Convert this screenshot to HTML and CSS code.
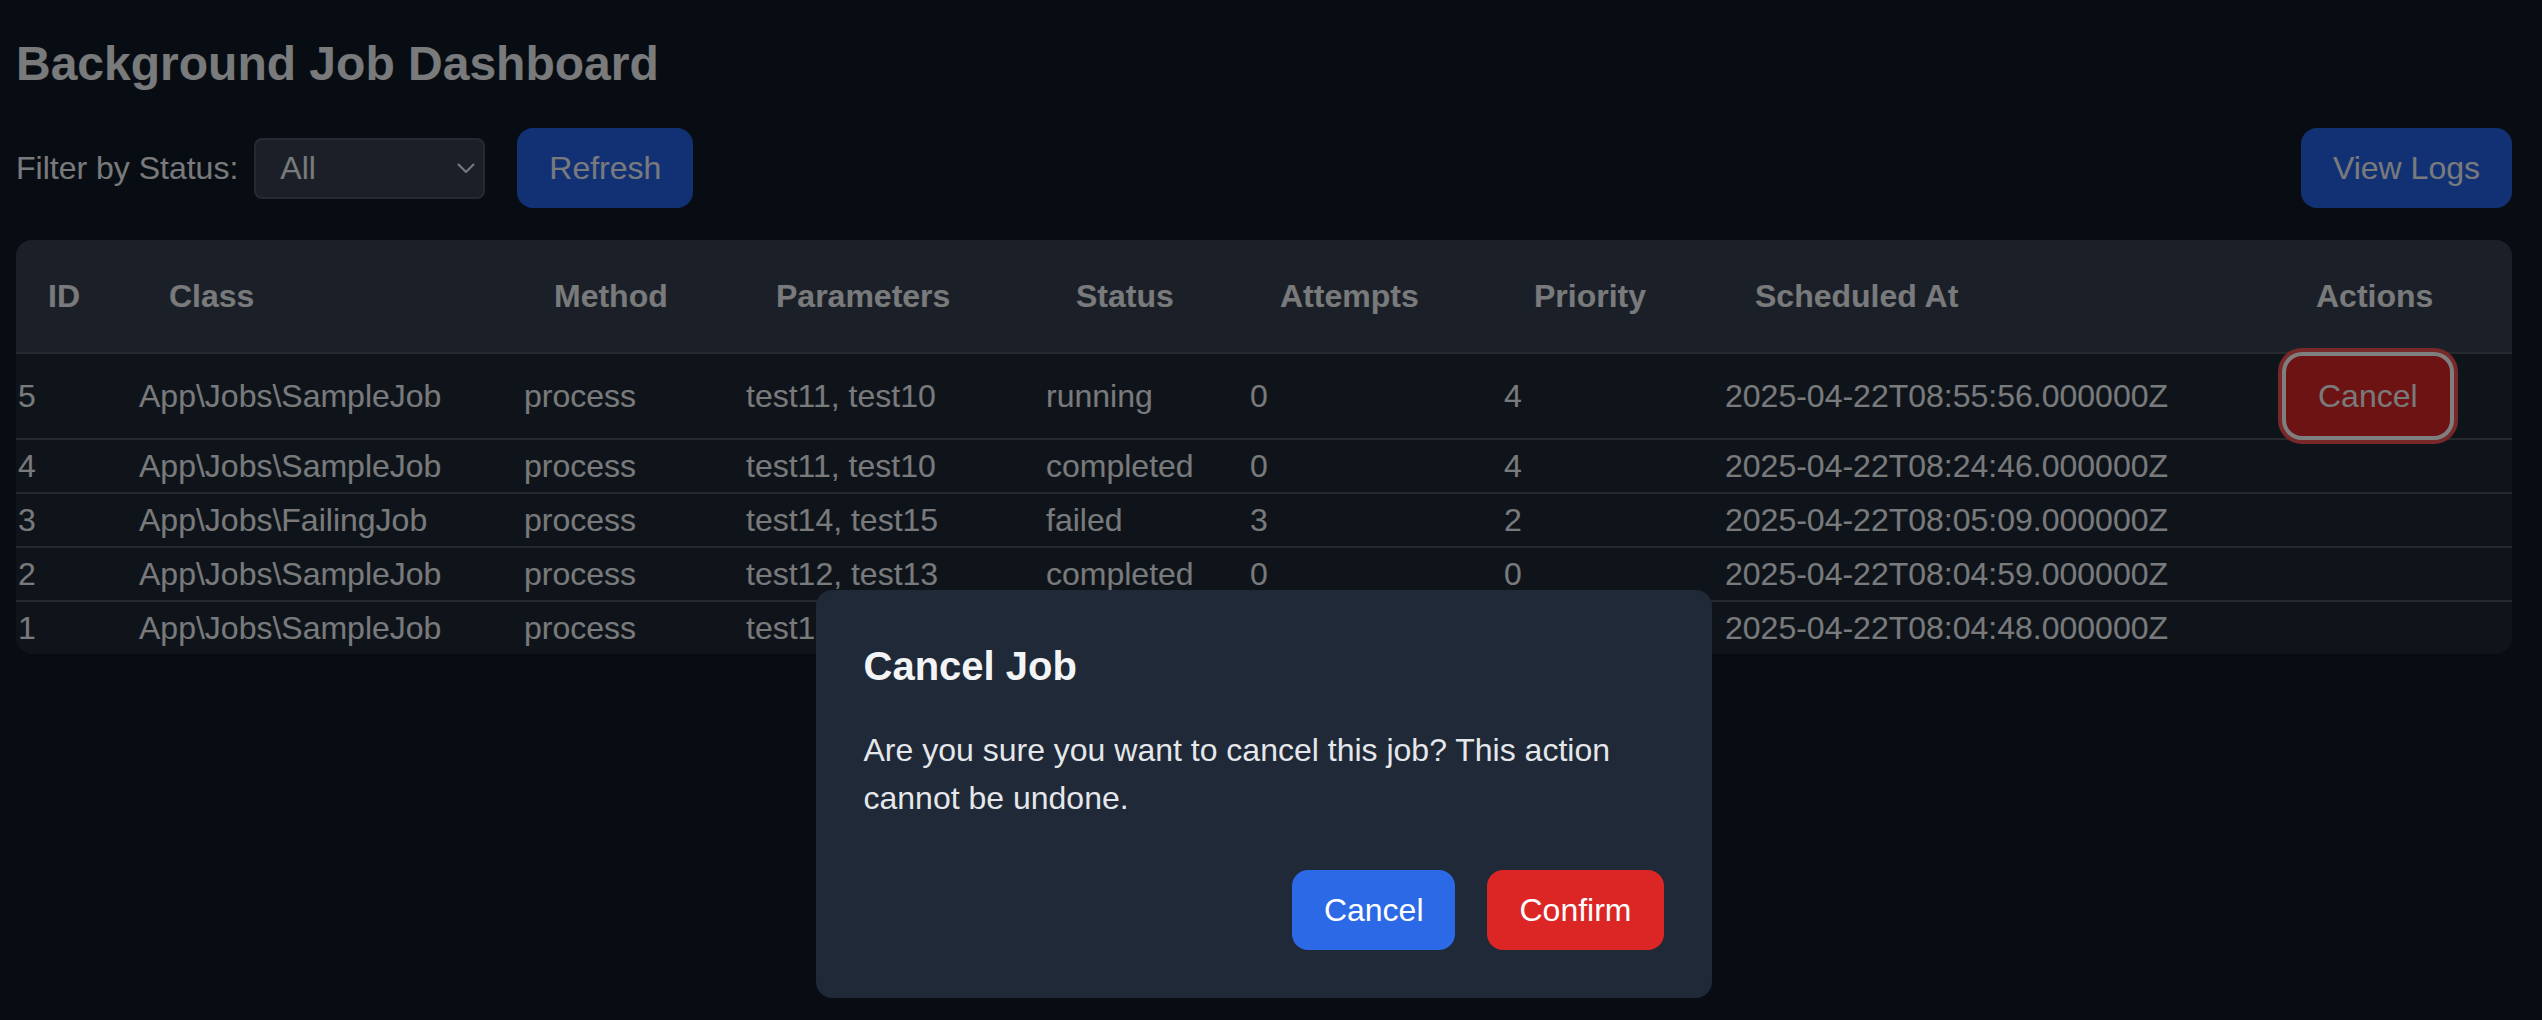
FILE: index.html
```html
<!DOCTYPE html>
<html lang="en">
<head>
<meta charset="utf-8">
<title>Background Job Dashboard</title>
<link rel="stylesheet" href="styles.css">
</head>
<body>
<div class="page">
  <h1 class="title">Background Job Dashboard</h1>
  <div class="controls">
    <label class="filter-label">Filter by Status:</label>
    <div class="select">
      <span class="select-value">All</span>
      <svg class="chevron" width="18" height="10" viewBox="0 0 18 10"><path d="M1 1 L9 9 L17 1" fill="none" stroke="currentColor" stroke-width="2"/></svg>
    </div>
    <button class="btn btn-blue refresh">Refresh</button>
    <div class="spacer"></div>
    <button class="btn btn-blue">View Logs</button>
  </div>
  <div class="table-wrap">
    <table class="jobs">
      <colgroup>
        <col class="c-id"><col class="c-class"><col class="c-method"><col class="c-params"><col class="c-status"><col class="c-attempts"><col class="c-priority"><col class="c-sched"><col class="c-actions">
      </colgroup>
      <thead>
        <tr><th>ID</th><th>Class</th><th>Method</th><th>Parameters</th><th>Status</th><th>Attempts</th><th>Priority</th><th>Scheduled At</th><th>Actions</th></tr>
      </thead>
      <tbody>
        <tr><td>5</td><td>App\Jobs\SampleJob</td><td>process</td><td>test11, test10</td><td>running</td><td>0</td><td>4</td><td>2025-04-22T08:55:56.000000Z</td><td><button class="btn btn-red focused">Cancel</button></td></tr>
        <tr><td>4</td><td>App\Jobs\SampleJob</td><td>process</td><td>test11, test10</td><td>completed</td><td>0</td><td>4</td><td>2025-04-22T08:24:46.000000Z</td><td></td></tr>
        <tr><td>3</td><td>App\Jobs\FailingJob</td><td>process</td><td>test14, test15</td><td>failed</td><td>3</td><td>2</td><td>2025-04-22T08:05:09.000000Z</td><td></td></tr>
        <tr><td>2</td><td>App\Jobs\SampleJob</td><td>process</td><td>test12, test13</td><td>completed</td><td>0</td><td>0</td><td>2025-04-22T08:04:59.000000Z</td><td></td></tr>
        <tr><td>1</td><td>App\Jobs\SampleJob</td><td>process</td><td>test1, test2</td><td>completed</td><td>0</td><td>1</td><td>2025-04-22T08:04:48.000000Z</td><td></td></tr>
      </tbody>
    </table>
  </div>
</div>
<div class="overlay">
  <div class="modal">
    <h2 class="modal-title">Cancel Job</h2>
    <p class="modal-text">Are you sure you want to cancel this job? This action cannot be undone.</p>
    <div class="modal-actions">
      <button class="btn btn-blue-bright">Cancel</button>
      <button class="btn btn-red-bright">Confirm</button>
    </div>
  </div>
</div>
</body>
</html>
```
FILE: styles.css
```css
* { box-sizing: border-box; }
html, body { margin: 0; padding: 0; }
body {
  background: #111827;
  color: #f3f4f6;
  font-family: "Liberation Sans", Arial, Helvetica, sans-serif;
  font-size: 32px;
  line-height: 1.5;
  height: 1020px;
  overflow: hidden;
}
.page { padding: 16px 30px 16px 16px; }
.title {
  margin: 16px 0 32px;
  font-size: 48px;
  line-height: 64px;
  font-weight: bold;
}
.controls {
  display: flex;
  align-items: center;
  height: 80px;
  margin-bottom: 32px;
}
.filter-label { margin-right: 16px; }
.select {
  width: 231px;
  height: 61px;
  background: #374151;
  border: 2px solid #4b5563;
  border-radius: 8px;
  display: flex;
  align-items: center;
  justify-content: space-between;
  padding: 0 8px 0 24px;
}
.chevron { color: #f3f4f6; }
.spacer { flex: 1; }
.refresh { margin-left: 32px; }
.btn {
  font-family: inherit;
  font-size: 32px;
  line-height: 48px;
  padding: 16px 32px;
  border: none;
  border-radius: 16px;
  color: #f3f4f6;
  cursor: pointer;
}
.btn-blue { background: #2563eb; }
.btn-red { background: #dc2626; }
.focused { box-shadow: 0 0 0 4px #ffffff, 0 0 0 8px #f05050; }
.table-wrap {
  background: #1f2937;
  border-radius: 16px;
  overflow: hidden;
}
.jobs {
  width: 100%;
  table-layout: fixed;
  border-collapse: collapse;
}
.c-id { width: 121px; }
.c-class { width: 385px; }
.c-method { width: 222px; }
.c-params { width: 300px; }
.c-status { width: 204px; }
.c-attempts { width: 254px; }
.c-priority { width: 221px; }
.c-sched { width: 561px; }
.c-actions { width: 228px; }
.jobs thead tr { background: #374151; }
.jobs th {
  padding: 32px;
  text-align: left;
  font-weight: bold;
  white-space: nowrap;
}
.jobs tbody tr { border-top: 2px solid #4b5563; }
.jobs td {
  padding: 2px;
  white-space: nowrap;
  vertical-align: middle;
}
.overlay {
  position: fixed;
  inset: 0;
  background: rgba(0, 0, 0, 0.5);
  display: flex;
  justify-content: center;
  align-items: flex-start;
  padding: 590px 15px 0 0;
}
.modal {
  width: 896px;
  background: #1f2937;
  border-radius: 16px;
  padding: 48px;
}
.modal-title {
  margin: 0 0 32px;
  font-size: 40px;
  line-height: 56px;
  font-weight: bold;
  color: #f3f4f6;
}
.modal-text {
  margin: 0;
  color: #e5e7eb;
}
.modal-actions {
  display: flex;
  justify-content: flex-end;
  gap: 32px;
  margin-top: 48px;
}
.btn-blue-bright { background: #2b69e6; color: #ffffff; }
.btn-red-bright { background: #dc2626; color: #ffffff; }
```
